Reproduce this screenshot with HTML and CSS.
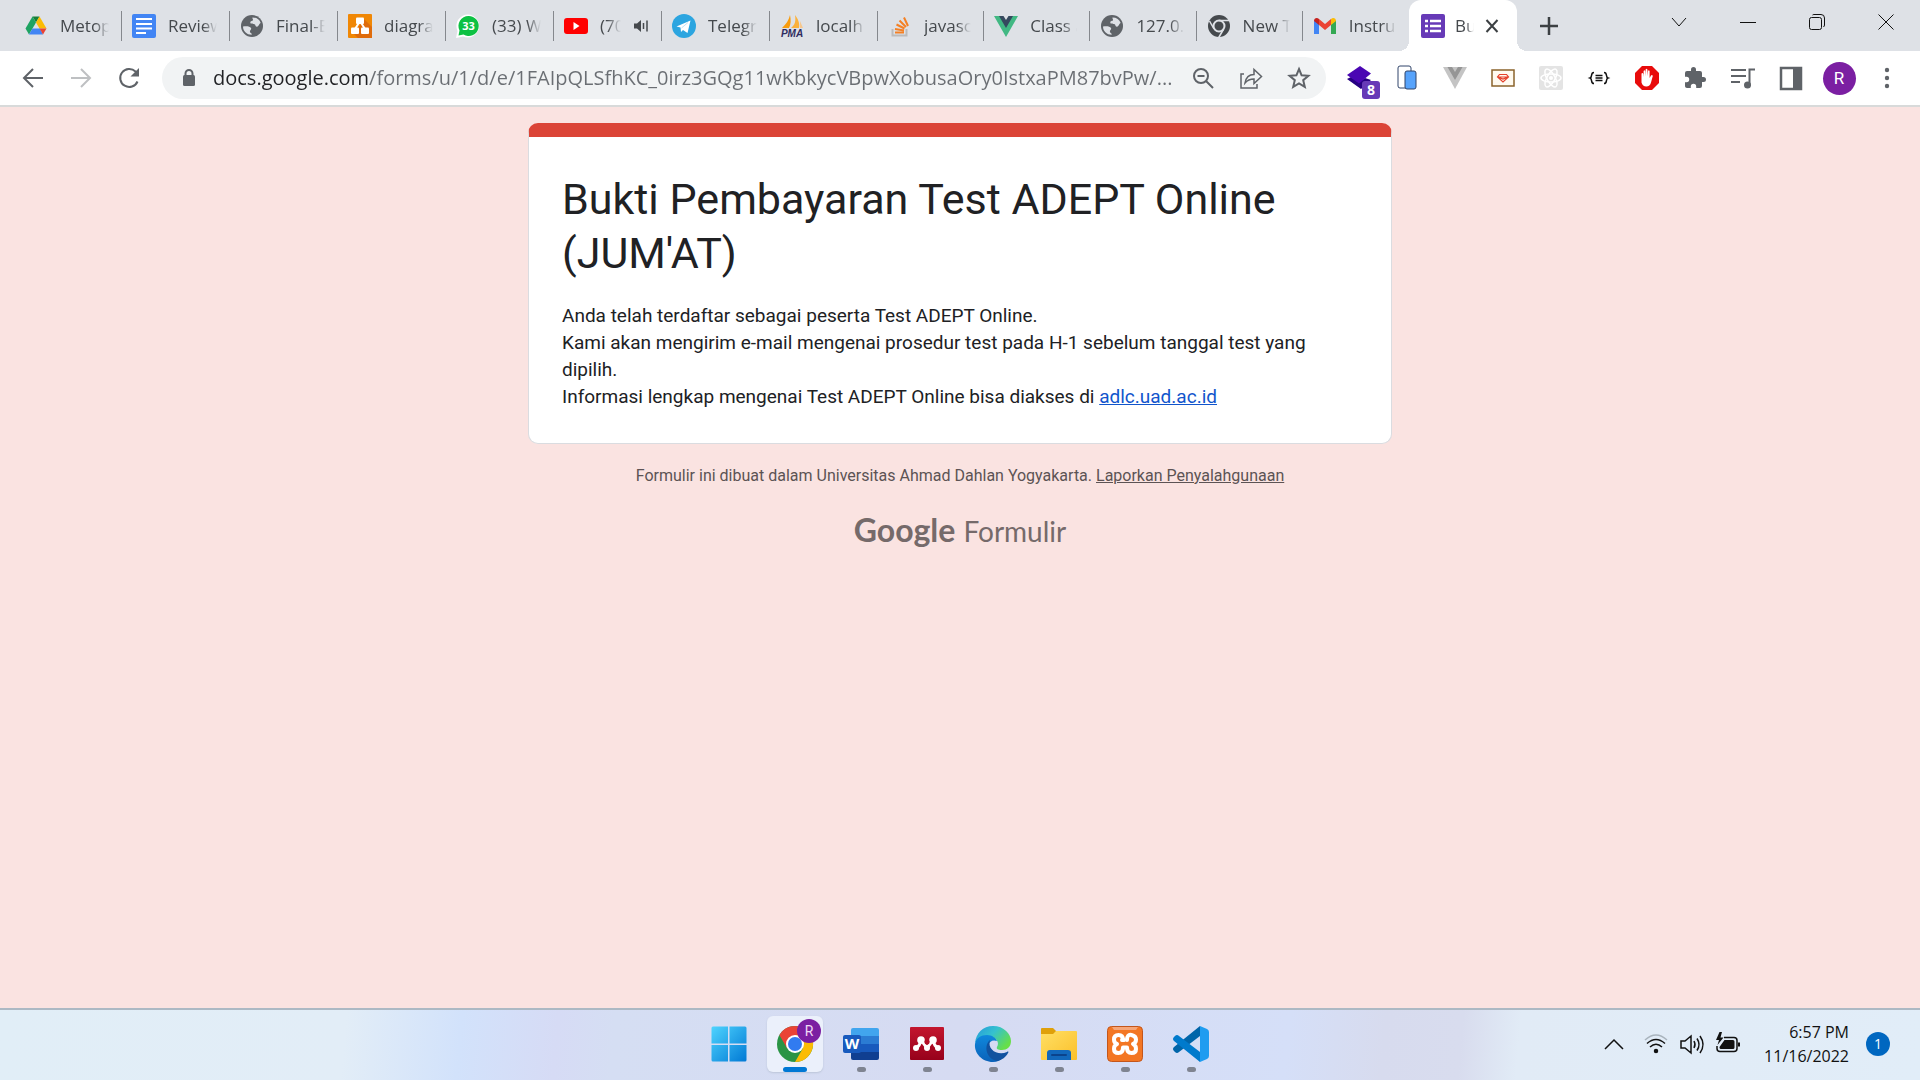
FILE: index.html
```html
<!DOCTYPE html>
<html lang="id">
<head>
<meta charset="utf-8">
<meta name="viewport" content="width=device-width, initial-scale=1">
<title>Bukti Pembayaran Test ADEPT Online (JUM'AT)</title>
<link rel="stylesheet" href="styles.css">
</head>
<body>
<header class="browser">
  <div class="strip">
    <div class="tabs" role="tablist">
      <button class="tab" role="tab">
        <svg class="fav" viewBox="0 0 24 24"><path fill="#188038" d="M8.500 2.500h7L12 8.500z"/><path fill="#fbbc04" d="M15.500 2.500l7 12h-7l-3.500-6z"/><path fill="#1ea362" d="M8.500 2.500 12 8.500 5 20.500 1.500 14.500z"/><path fill="#4285f4" d="M8.500 14.500h7.500L19 20.500H5z"/><path fill="#ea4335" d="M15.500 14.500h7L19 20.500z"/></svg>
        <span class="tab-title">Metop</span>
      </button>
      <button class="tab" role="tab">
        <svg class="fav" viewBox="0 0 24 24"><rect width="24" height="24" rx="2" fill="#4285f4"/><path stroke="#fff" stroke-width="2" d="M4 5h16M4 10h16M4 14.500h16M4 19h10"/></svg>
        <span class="tab-title">Review</span>
      </button>
      <button class="tab" role="tab">
        <svg class="fav" viewBox="0 0 24 24"><circle cx="12" cy="12" r="11" fill="#5f6368"/><path fill="#dee1e6" d="M3 12.500c3-.5 7-.5 8 1.500.8 1.700-1.500 2-1 4 .3 1.200 2 1 1.700 2.800C6.500 20.800 3 17 3 12.500zM12.500 3.500c4 0 7 2 8.200 5.500-1.700.5-1.700 3.500-3.700 3.700-2 .2-1-2.200-3-2.700-1.600-.4-3.500.3-3.700-1.500-.2-1.600 2.500-1.300 2.700-2.500.1-1-.8-1.200-.5-2.500z"/></svg>
        <span class="tab-title">Final-E</span>
      </button>
      <button class="tab" role="tab">
        <svg class="fav" viewBox="0 0 24 24"><rect width="24" height="24" rx="1" fill="#f08705"/><path fill="#df6c0c" d="M15 4l9 9v11H10l-5-5 8-9z"/><path stroke="#fff" stroke-width="2" fill="none" d="M11.500 8 7 15M12.500 8l4.500 7"/><rect x="8" y="3.500" width="8" height="6.500" rx="1" fill="#fff"/><rect x="3" y="13.500" width="8" height="6.500" rx="1" fill="#fff"/><rect x="13" y="13.500" width="8" height="6.500" rx="1" fill="#fff"/></svg>
        <span class="tab-title">diagra</span>
      </button>
      <button class="tab" role="tab">
        <svg class="fav" viewBox="0 0 24 24"><path fill="#fff" d="M12 .5A11.500 11.500 0 1 1 7 22.500L0 24l1.500-7A11.500 11.500 0 0 1 12 .5z"/><path fill="#0dc143" d="M12.500 2A10 10 0 1 1 7.500 20.500L2.500 21.500l1-5A10 10 0 0 1 12.500 2z"/><text x="12.500" y="16" text-anchor="middle" class="fav-count">33</text></svg>
        <span class="tab-title">(33) W</span>
      </button>
      <button class="tab" role="tab">
        <svg class="fav" viewBox="0 0 24 24"><rect y="4" width="24" height="16" rx="3" fill="#f00"/><path fill="#fff" d="M9.500 8v8l6-4z"/></svg>
        <span class="tab-title">(70</span>
        <svg class="audio" viewBox="0 0 16 16"><path fill="#45494d" d="M1 5.500h3l4-3.500v12L4 10.500H1z"/><path stroke="#45494d" stroke-width="1.500" fill="none" d="M10.500 5v6M14 2.500v11"/></svg>
      </button>
      <button class="tab" role="tab">
        <svg class="fav" viewBox="0 0 24 24"><circle cx="12" cy="12" r="12" fill="#2ca5e0"/><path fill="#fff" d="M4.500 12.500 18.500 6.500 15.500 19l-4.500-3-2 2-.5-4.500z"/><path stroke="#bfe1f3" d="m9.500 14 6.500-5.500"/></svg>
        <span class="tab-title">Telegr</span>
      </button>
      <button class="tab" role="tab">
        <svg class="fav" viewBox="0 0 24 24"><path fill="#f89c0e" d="M10 1c1 5 1 9-1 13H2c4-4 7-8 8-13z"/><path fill="#fbb13c" d="M15 1c3 4 5 8 4 13h-8c4-3 5-7 4-13z"/><path fill="#f6c78e" d="m20 7 3 7h-3zM6 7l-3 5"/><text x="12" y="23" text-anchor="middle" class="fav-pma">PMA</text></svg>
        <span class="tab-title">localh</span>
      </button>
      <button class="tab" role="tab">
        <svg class="fav" viewBox="0 0 24 24"><path fill="none" stroke="#bcbbbb" stroke-width="2" d="M4.500 15v6.500h14V15"/><path stroke="#f48024" stroke-width="2" d="M7 18.500h9M7 15l9 1.500M8.500 10.500l8 4M11.500 6.500l6.500 6.500M16 3.500l4 8.500"/></svg>
        <span class="tab-title">javasc</span>
      </button>
      <button class="tab" role="tab">
        <svg class="fav" viewBox="0 0 24 24"><path fill="#41b883" d="M0 2h6l6 9 6-9h6L12 23z"/><path fill="#35495e" d="M5 2h4.500L12 6l2.500-4H19l-7 12z"/></svg>
        <span class="tab-title">Class a</span>
      </button>
      <button class="tab" role="tab">
        <svg class="fav" viewBox="0 0 24 24"><circle cx="12" cy="12" r="11" fill="#5f6368"/><path fill="#dee1e6" d="M3 12.500c3-.5 7-.5 8 1.500.8 1.700-1.500 2-1 4 .3 1.200 2 1 1.700 2.800C6.500 20.800 3 17 3 12.500zM12.500 3.500c4 0 7 2 8.200 5.500-1.700.5-1.700 3.500-3.700 3.700-2 .2-1-2.200-3-2.700-1.600-.4-3.500.3-3.700-1.500-.2-1.600 2.500-1.300 2.700-2.500.1-1-.8-1.200-.5-2.500z"/></svg>
        <span class="tab-title">127.0.</span>
      </button>
      <button class="tab" role="tab">
        <svg class="fav" viewBox="0 0 24 24"><circle cx="12" cy="12" r="11" fill="#45494d"/><circle cx="12" cy="12" r="5.500" fill="none" stroke="#dee1e6" stroke-width="2"/><path stroke="#dee1e6" stroke-width="1.500" d="M12 6.500h10M7 15 2.500 7M16.700 15l-5 8.500"/></svg>
        <span class="tab-title">New T</span>
      </button>
      <button class="tab last" role="tab">
        <svg class="fav" viewBox="0 0 24 24"><path fill="#4285f4" d="M1 6v14h5V10z"/><path fill="#34a853" d="M23 6v14h-5V10z"/><path fill="#ea4335" d="M6 5l6 5 6-5v6l-6 5-6-5z"/><path fill="#c5221f" d="M1 7c0-3 3-4 5-2v6L1 7z"/><path fill="#fbbc04" d="M23 7c0-3-3-4-5-2v6l5-4z"/></svg>
        <span class="tab-title">Instru</span>
      </button>
      <div class="tab active">
        <svg class="fav" viewBox="0 0 24 24"><rect width="24" height="24" rx="2" fill="#673ab7"/><path stroke="#fff" stroke-width="2.500" d="M4 7h3M9 7h11M4 12h3M9 12h11M4 17h3M9 17h11"/></svg>
        <span class="tab-title" role="tab" aria-selected="true">Bu</span>
        <button class="close" aria-label="Close tab"><svg viewBox="0 0 16 16"><path stroke="#3c4043" stroke-width="2" d="M2.500 2l11 12M13.500 2l-11 12"/></svg></button>
      </div>
    </div>
    <button class="new-tab" aria-label="New tab"><svg viewBox="0 0 20 20"><path stroke="#3c4043" stroke-width="2.500" d="M10 1v18M1 10h18"/></svg></button>
    <div class="window-controls">
      <button aria-label="Search tabs"><svg viewBox="0 0 16 16"><path d="M1 4l7 8 7-8"/></svg></button>
      <button aria-label="Minimize"><svg viewBox="0 0 16 16"><path d="M0 8.500h16"/></svg></button>
      <button aria-label="Restore"><svg viewBox="0 0 16 16"><rect x=".5" y="3.500" width="12" height="12" rx="2"/><path d="M3.500 1Q4 .5 5 .5h7q3.500 0 3.500 3.500v7q0 1-1 2"/></svg></button>
      <button aria-label="Close"><svg viewBox="0 0 16 16"><path d="M.5.5l15 15M15.500.5l-15 15"/></svg></button>
    </div>
  </div>
  <div class="toolbar">
    <button class="tool" aria-label="Back"><svg viewBox="0 0 24 24"><path class="line" d="M22 12H3M12 3l-9 9 9 9"/></svg></button>
    <button class="tool faded" aria-label="Forward"><svg viewBox="0 0 24 24"><path class="line" d="M2 12h19M12 3l9 9-9 9"/></svg></button>
    <button class="tool" aria-label="Reload"><svg viewBox="0 0 24 24"><path class="line" d="M20.500 15.500A9 9 0 1 1 18.500 5.500L20 7"/><path fill="#5f6368" d="M22 2v8.500h-8.500z"/></svg></button>
    <div class="omnibox">
      <svg class="lock" viewBox="0 0 16 18"><rect x="2" y="6" width="12" height="11" rx="1.500" fill="#5f6368"/><path class="line" d="M4.500 7V4.500a3.500 3.500 0 0 1 7 0V7"/></svg>
      <input class="url" type="text" aria-label="Address" value="docs.google.com/forms/u/1/d/e/1FAIpQLSfhKC_0irz3GQg11wKbkycVBpwXobusaOry0IstxaPM87bvPw/...">
      <button class="tool" aria-label="Zoom"><svg viewBox="0 0 24 24"><circle class="line" cx="10" cy="10" r="7"/><path class="line" d="m15 15 7 7M6.500 10h7"/></svg></button>
      <button class="tool" aria-label="Share"><svg viewBox="0 0 24 24"><path class="thin" d="M5 8H2v14h16v-4"/><path class="thin" d="M6 17c1-6 4-8.500 9-8.500V3.500l7.500 7-7.500 7v-4.500c-4 0-6.500 1-9 4z"/></svg></button>
      <button class="tool" aria-label="Bookmark"><svg viewBox="0 0 24 24"><path class="line" d="m12 3 2.600 6.300 6.800.5-5.200 4.400 1.600 6.600-5.800-3.500-5.800 3.500 1.600-6.600-5.200-4.400 6.800-.5z"/></svg></button>
    </div>
    <button class="tool" aria-label="Extension, 8 items"><svg viewBox="0 0 24 24"><path fill="#270082" d="m0 13 4-2 8 5 6-4 6 2-10 9z"/><path fill="#4a06b3" d="m13 0 11 7.500-12 10L0 9z"/></svg><span class="badge">8</span></button>
    <button class="tool" aria-label="Device preview"><svg viewBox="0 0 24 24"><rect x="3" y="0" width="13" height="22" rx="2" fill="#fff" stroke="#31456a"/><rect x="10" y="5" width="11" height="18" rx="2" fill="#57a3fb" stroke="#31456a"/></svg></button>
    <button class="tool" aria-label="Vue"><svg viewBox="0 0 24 24"><path fill="#c4c4c4" d="M0 1h24L12 23z"/><path fill="#959595" d="M4.500 1H9l3 5 3-5h4.500L12 14z"/></svg></button>
    <button class="tool" aria-label="Ruby"><svg viewBox="0 0 24 24"><rect x="1" y="4" width="22" height="16" fill="#fffaf0" stroke="#8b632b" stroke-width="1.500"/><path fill="none" stroke="#e5412b" stroke-width="1.200" d="M8.500 8.500h7l2 2.500-5.500 5L6.500 11zM7 11h10l-5 2z"/></svg></button>
    <button class="tool" aria-label="React"><svg viewBox="0 0 24 24"><rect width="24" height="24" rx="2" fill="#e4e4e4"/><g fill="none" stroke="#fff" stroke-width="1.500"><ellipse cx="12" cy="12" rx="10" ry="4"/><ellipse cx="12" cy="12" rx="10" ry="4" transform="rotate(60 12 12)"/><ellipse cx="12" cy="12" rx="10" ry="4" transform="rotate(120 12 12)"/></g><circle cx="12" cy="12" r="2" fill="#fff"/></svg></button>
    <button class="tool" aria-label="JSON"><svg viewBox="0 0 24 24"><path fill="none" stroke="#111" stroke-width="1.500" d="M7 6.500C3 6.500 6 11 3 12 6 13 3 17.500 7 17.500M17 6.500c4 0 1 4.500 4 5.500-3 1 0 5.500-4 5.500M8.500 9.500h7M8.500 12h7M8.500 14.500h7"/></svg></button>
    <button class="tool" aria-label="Ad blocker"><svg class="large" viewBox="0 0 28 28"><path fill="#e80b0b" d="M9 2h10l7 7v10l-7 7H9l-7-7V9z"/><path fill="#fff" d="M8.500 9.500q1.200-1 1.800.500l.3 3V7q.9-1.300 1.600 0l.4 5V5.500q1-1.300 1.800 0l.2 6.500.4-5q.9-1.300 1.600 0v7l1.400-2.500q1.300-1 1.800.5l-1.800 6.500q-1 4-4.700 4t-4.800-4z"/></svg></button>
    <button class="tool" aria-label="Extensions"><svg viewBox="0 0 24 24"><path fill="#5f6368" d="M20.500 11H19V7a2 2 0 0 0-2-2h-4V3.500a2.500 2.500 0 0 0-5 0V5H4a2 2 0 0 0-2 2v3.800h1.500a2.700 2.700 0 0 1 0 5.400H2V20c0 1.100.9 2 2 2h3.800v-1.500a2.700 2.700 0 0 1 5.400 0V22H17a2 2 0 0 0 2-2v-4h1.500a2.500 2.500 0 0 0 0-5z"/></svg></button>
    <button class="tool" aria-label="Media"><svg viewBox="0 0 24 24"><path class="line" d="M0 4h15M0 10h15M0 16h9M18.500 20V3.500H24"/><circle cx="16.500" cy="19" r="3.500" fill="#5f6368"/></svg></button>
    <button class="tool" aria-label="Side panel"><svg viewBox="0 0 24 24"><rect x="2" y="2" width="20" height="21" fill="none" stroke="#5f6368" stroke-width="2.500"/><path fill="#5f6368" d="M14 2h8v21h-8z"/></svg></button>
    <button class="tool" aria-label="Profile"><span class="avatar">R</span></button>
    <button class="tool" aria-label="Menu"><svg viewBox="0 0 24 24"><g fill="#5f6368"><circle cx="12" cy="4" r="2.200"/><circle cx="12" cy="12" r="2.200"/><circle cx="12" cy="20" r="2.200"/></g></svg></button>
  </div>
</header>

<main class="page">
  <section class="card">
    <h1>Bukti Pembayaran Test ADEPT Online (JUM'AT)</h1>
    <p>Anda telah terdaftar sebagai peserta Test ADEPT Online.<br>Kami akan mengirim e-mail mengenai prosedur test pada H-1 sebelum tanggal test yang dipilih.<br>Informasi lengkap mengenai Test ADEPT Online bisa diakses di <a href="#">adlc.uad.ac.id</a></p>
  </section>
  <p class="notice">Formulir ini dibuat dalam Universitas Ahmad Dahlan Yogyakarta. <a href="#">Laporkan Penyalahgunaan</a></p>
  <a class="brand" href="#"><span class="brand-name">Google</span> <span class="brand-product">Formulir</span></a>
</main>

<footer class="taskbar">
  <nav class="apps">
    <button class="app" aria-label="Start"><svg viewBox="0 0 36 36"><defs><linearGradient id="win" gradientUnits="userSpaceOnUse" x1="0" y1="0" x2="36" y2="36"><stop offset="0" stop-color="#4fd5ff"/><stop offset="1" stop-color="#0078d4"/></linearGradient></defs><path fill="url(#win)" d="M2 .5h15v17H.5V2A1.500 1.500 0 0 1 2 .5zM18.500.5H34A1.500 1.500 0 0 1 35.500 2v15.500h-17zM.5 19H17v16.500H2A1.500 1.500 0 0 1 .5 34zM18.500 19h17v15a1.500 1.500 0 0 1-1.500 1.500H18.500z"/></svg></button>
    <button class="app current" aria-label="Chrome"><svg viewBox="0 0 36 36"><circle cx="18" cy="18" r="18" fill="#2a9445"/><path fill="#ea4335" d="M2.400 9A18 18 0 0 1 33.600 9L18 9.500 10.200 22.500z"/><path fill="#fbbc04" d="M33.600 9A18 18 0 0 1 18 36l7.800-13.500L18 9z"/><circle cx="18" cy="18" r="9" fill="#fff"/><circle cx="18" cy="18" r="7" fill="#317bf0"/></svg><span class="app-badge">R</span></button>
    <button class="app open" aria-label="Word"><svg viewBox="0 0 36 36"><path fill="#41a5ee" d="M10 2h24a2 2 0 0 1 2 2v6H8V4a2 2 0 0 1 2-2z"/><path fill="#2b7cd3" d="M8 10h28v8H8z"/><path fill="#185abd" d="M8 18h28v8H8z"/><path fill="#103f91" d="M8 26h28v6a2 2 0 0 1-2 2H10a2 2 0 0 1-2-2z"/><rect y="9" width="18" height="18" rx="2" fill="#185abd"/><text x="9" y="23" text-anchor="middle" class="word-letter">W</text></svg></button>
    <button class="app open" aria-label="Mendeley"><svg viewBox="0 0 36 36"><defs><linearGradient id="men" x1="0" y1="0" x2="0" y2="1"><stop offset="0" stop-color="#c3162e"/><stop offset="1" stop-color="#97011b"/></linearGradient></defs><rect x="1" y="1" width="34" height="33" rx="1" fill="url(#men)"/><path fill="none" stroke="#fff" stroke-width="3" d="M7 22q4-2 5-8M12 14l6 8 6-8M24 14q1 6 5 8"/><g fill="#fff"><circle cx="12" cy="14" r="3.800"/><circle cx="24" cy="14" r="3.800"/><circle cx="7" cy="22" r="3"/><circle cx="18" cy="22" r="3"/><circle cx="29" cy="22" r="3"/></g><circle cx="18" cy="16" r="2.500" fill="#b30f26"/></svg></button>
    <button class="app open" aria-label="Edge"><svg viewBox="0 0 36 36"><defs><linearGradient id="edge" x1="0" y1="0" x2="1" y2=".6"><stop offset="0" stop-color="#2398dc"/><stop offset=".5" stop-color="#35c1cf"/><stop offset="1" stop-color="#67df48"/></linearGradient><linearGradient id="edgeb" x1="0" y1="0" x2="0" y2="1"><stop offset="0" stop-color="#0f88dc"/><stop offset="1" stop-color="#0b62b9"/></linearGradient></defs><path fill="url(#edge)" d="M0 17C1 7 8 0 18 0c11 0 18 8 18 15 0 6-4 9-9 9-4 0-6-1-5-3 3-5-1-10-8-10C7 11 2 14 0 17z"/><path fill="url(#edgeb)" d="M0 18c1-6 6-9 12-9 5 0 9 3 10 6-8-3-12 7-7 13 4 5 11 4 14 3-3 3-7 5-11 5C7 36-1 27 0 18z"/><path fill="#11529f" d="M15 14c-6 5-5 18 7 21 5-1 9-4 11-8 1-1 0-2-1-1-9 4-20-2-17-12z"/></svg></button>
    <button class="app open" aria-label="File Explorer"><svg viewBox="0 0 36 36"><defs><linearGradient id="fold" x1="0" y1="0" x2="1" y2="1"><stop offset="0" stop-color="#ffdf65"/><stop offset="1" stop-color="#fbc02a"/></linearGradient></defs><path fill="#dfa00a" d="M0 3q0-1 1-1h11l3 3v4H0z"/><path fill="url(#fold)" d="M0 8h12l3-3h20q1 0 1 1v27q0 1-1 1H1q-1 0-1-1z"/><path fill="#1268bb" d="M6 34v-7q0-3 3-3h18q3 0 3 3v7z"/><path stroke="#0b438b" stroke-width="2" stroke-linecap="round" d="M11 29h14"/></svg></button>
    <button class="app open" aria-label="XAMPP"><svg viewBox="0 0 36 36"><rect x=".5" y=".5" width="35" height="35" rx="4" fill="#f37623" stroke="#c4561b"/><path fill="#f6a678" d="M5 1h26l-2 3H7z"/><path fill="none" stroke="#fff" stroke-width="4" stroke-linecap="round" stroke-linejoin="round" d="M16 14q0-5-4.500-5t-4.500 4.500q0 3.500 3 4.500-3 1-3 5t4.500 4 4.500-5.500h4q0 5.500 4.500 5.500t4.500-4-3-5q3-1 3-4.500T24.500 9 20 14"/><path stroke="#fff" stroke-width="4" stroke-linecap="round" d="M15 14h2"/></svg></button>
    <button class="app open" aria-label="Visual Studio Code"><svg viewBox="0 0 36 36"><path fill="#0065a9" d="M27 0v10L6 26q-2 2-4 0l-1-1q-2-2 0-4z"/><path fill="#007acc" d="M27 36V26L6 10Q4 8 2 10l-1 1q-2 2 0 4z"/><path fill="#1f9cf0" d="m27 0 7 3q2 1 2 3v24q0 2-2 3l-7 3z"/></svg></button>
  </nav>
  <div class="tray">
    <button class="tray-more" aria-label="Hidden icons"><svg viewBox="0 0 20 20"><path d="m1 15 9-9 9 9"/></svg></button>
    <button class="tray-status" aria-label="Network, volume and battery">
      <svg viewBox="0 0 24 24"><path stroke="#a9b4bd" d="M1 8q11-10 22 0"/><path d="M3 11.500q9-8 18 0M6 15q6-5.500 12 0"/><circle cx="12" cy="19" r="1.500" fill="#111"/></svg>
      <svg viewBox="0 0 24 24"><path d="M1 9h4l6-5v17l-6-5H1zM14 9q2 3.500 0 7M17 6.500q4 6 0 12M20 4q6 8.500 0 17"/></svg>
      <svg viewBox="0 0 24 24"><path d="M8 5.500h10q3 0 3 3v8q0 3-3 3H4q-3 0-3-3V14"/><path fill="#111" stroke="none" d="M8.500 8H17q1.500 0 1.500 1.500v6q0 1.500-1.500 1.500H5q-1.500 0-1.500-1.500V15zM22 10.500h2v4h-2zM3.500 0 0 8h3L1.500 13 7.500 5.500h-3L6 0z"/></svg>
    </button>
    <button class="clock"><time datetime="2022-11-16T18:57">6:57 PM<br>11/16/2022</time></button>
    <button class="alerts" aria-label="Notifications">1</button>
  </div>
</footer>
</body>
</html>
```
FILE: styles.css
```css
* { box-sizing: border-box; }

body {
  margin: 0;
  min-height: 100vh;
  display: flex;
  flex-direction: column;
  background: #fae3e1;
  color: #202124;
  font-family: Roboto, "Liberation Sans", sans-serif;
}

button {
  padding: 0;
  border: 0;
  background: none;
  color: inherit;
  font: inherit;
}

svg { display: block; overflow: visible; }

/* Tab strip */
.browser {
  border-bottom: 2px solid #d8dada;
  background: #fff;
  font-family: "Open Sans", "Noto Sans", sans-serif;
}

.strip {
  display: flex;
  height: 51px;
  padding-left: 14px;
  background: #dee1e6;
}

.tabs {
  display: grid;
  grid-template-columns: repeat(8, 108px) repeat(5, minmax(0, 1fr)) 108px;
  width: 1503px;
  align-items: center;
}

.tab {
  display: flex;
  align-items: center;
  gap: 12px;
  min-width: 0;
  height: 30px;
  padding: 0 12px 0 10px;
  border-right: 1px solid #85888d;
  color: #45494d;
  font-size: 17px;
  line-height: 24px;
}

.tab.last { border-right-color: transparent; }

.fav { flex: none; width: 24px; height: 24px; }
.fav-count { fill: #fff; font: bold 11px "Open Sans", sans-serif; }
.fav-pma { fill: #2f2b5f; font: italic bold 10px "Liberation Sans", sans-serif; }

.tab-title {
  flex: 1;
  min-width: 0;
  overflow: hidden;
  text-align: left;
  white-space: nowrap;
  mask-image: linear-gradient(90deg, #000 calc(100% - 14px), transparent);
}

.audio { flex: none; width: 16px; height: 16px; }

.tab.active {
  position: relative;
  gap: 10px;
  height: 51px;
  padding: 0 17px 0 12px;
  border: 0;
  border-radius: 12px 12px 0 0;
  background: #fff;
}

.tab.active .tab-title {
  mask-image: linear-gradient(90deg, #000 calc(100% - 8px), transparent);
}

.tab.active::before,
.tab.active::after {
  content: "";
  position: absolute;
  bottom: 0;
  width: 10px;
  height: 10px;
}

.tab.active::before {
  right: 100%;
  background: radial-gradient(circle at 0 0, transparent 10px, #fff 10px);
}

.tab.active::after {
  left: 100%;
  background: radial-gradient(circle at 100% 0, transparent 10px, #fff 10px);
}

.close svg { width: 16px; height: 16px; }

.new-tab { display: grid; width: 64px; place-items: center; }
.new-tab svg { width: 20px; height: 20px; }

.window-controls {
  display: flex;
  height: 44px;
  margin-left: auto;
}

.window-controls button { display: grid; width: 69px; place-items: center; }
.window-controls svg { width: 16px; height: 16px; fill: none; stroke: #111; }

/* Toolbar */
.toolbar {
  display: flex;
  align-items: center;
  height: 54px;
  padding: 0 9px;
}

.tool {
  position: relative;
  display: grid;
  flex: none;
  width: 48px;
  height: 42px;
  place-items: center;
}

.tool svg { width: 24px; height: 24px; }
.tool svg.large { width: 28px; height: 28px; }
.tool.faded { opacity: 0.4; }

.line { fill: none; stroke: #5f6368; stroke-width: 2; }
.thin { fill: none; stroke: #5f6368; stroke-width: 1.5; }

.omnibox {
  display: flex;
  flex: 1;
  align-items: center;
  min-width: 0;
  height: 42px;
  margin: 0 9px;
  padding: 0 3px 0 19px;
  border-radius: 21px;
  background: #f1f3f4;
}

.lock { flex: none; width: 16px; height: 18px; margin-right: 16px; }

.url {
  flex: 1;
  min-width: 0;
  padding: 0;
  border: 0;
  background: linear-gradient(90deg, #202124 156px, #6a6e73 156px);
  background-clip: text;
  -webkit-text-fill-color: transparent;
  font: 20px/30px "Open Sans", "Noto Sans", sans-serif;
}

.badge {
  position: absolute;
  top: 24px;
  right: 3px;
  width: 18px;
  height: 18px;
  border-radius: 3px;
  background: #673ab7;
  color: #fff;
  font-size: 14px;
  font-weight: 700;
  line-height: 18px;
}

.avatar {
  width: 33px;
  height: 33px;
  border-radius: 50%;
  background: #7b1fa2;
  color: #fff;
  font: 17px/33px Roboto, sans-serif;
}

/* Form confirmation */
.page {
  display: flex;
  flex: 1;
  flex-direction: column;
  align-items: center;
  padding: 16px;
}

.card {
  width: 100%;
  max-width: 864px;
  padding: 0 33px;
  border: 1px solid #dadce0;
  border-top: 14px solid #db4437;
  border-radius: 10px;
  background: #fff;
}

.card h1 {
  margin: 35px 0 22px;
  font-size: 43px;
  font-weight: 400;
  line-height: 54px;
}

.card p { margin: 0 0 33px; font-size: 19px; line-height: 27px; }
.card a { color: #1155cc; }

.notice {
  margin: 20px 0 0;
  color: #5c5354;
  font-size: 16px;
  line-height: 24px;
}

.notice a { color: inherit; }

.brand {
  display: flex;
  align-items: baseline;
  gap: 8px;
  margin-top: 22px;
  color: #756a6a;
  font-family: Lato, sans-serif;
  line-height: 40px;
  text-decoration: none;
}

.brand-name { font-size: 32px; font-weight: 700; }
.brand-product { font-size: 28px; }

/* Taskbar */
.taskbar {
  display: grid;
  grid-template-columns: 1fr auto 1fr;
  align-items: center;
  height: 72px;
  padding-bottom: 2px;
  border-top: 2px solid #acb9c4;
  background: linear-gradient(95deg, #e1eef7 0%, #e2edf7 18%, #d2e2fb 24%, #d6dbf5 29%, #d5def3 32%, #d6dbf2 50%, #d5dff8 67%, #d7dbee 72%, #d8dcee 76%, #e1ebf6 79%, #e1edf8 100%);
  font-family: "Open Sans", "Noto Sans", sans-serif;
}

.apps { display: flex; grid-column: 2; gap: 10px; }

.app {
  position: relative;
  display: grid;
  width: 56px;
  height: 56px;
  border-radius: 6px;
  place-items: center;
}

.app svg { width: 36px; height: 36px; }
.app.current { background: #ebf0fb; box-shadow: 0 1px 2px #bcc5d8; }

.app.open::after,
.app.current::after {
  content: "";
  position: absolute;
  bottom: 0;
  width: 9px;
  height: 5px;
  border-radius: 3px;
  background: #7f8491;
}

.app.current::after { width: 24px; background: #0078d4; }

.app-badge {
  position: absolute;
  top: 3px;
  right: 2px;
  width: 24px;
  height: 24px;
  border-radius: 50%;
  background: #7b1fa2;
  color: #f0d9f5;
  font: 14px/24px Roboto, sans-serif;
}

.word-letter { fill: #fff; font: bold 15px "Open Sans", sans-serif; }

.tray {
  display: flex;
  align-items: center;
  justify-content: flex-end;
  padding-right: 30px;
  color: #111;
}

.tray svg { fill: none; stroke: #111; stroke-width: 1.5; }
.tray-more { margin-right: 20px; }
.tray-more svg { width: 20px; height: 20px; }
.tray-status { display: flex; gap: 12px; margin-right: 24px; }
.tray-status svg { width: 24px; height: 24px; }

.clock {
  margin-right: 17px;
  font-size: 16px;
  line-height: 24px;
  text-align: right;
}

.alerts {
  width: 24px;
  height: 24px;
  border-radius: 50%;
  background: #0067c0;
  color: #fff;
  font-size: 14px;
  line-height: 24px;
}
```
